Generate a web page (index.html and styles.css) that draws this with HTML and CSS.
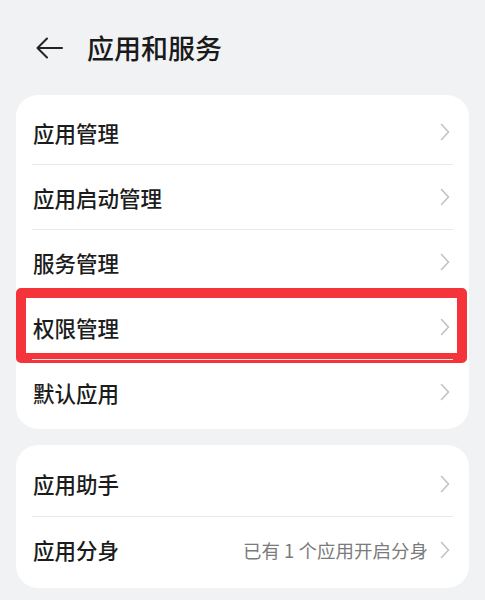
FILE: index.html
```html
<!DOCTYPE html>
<html lang="zh-CN">
<head>
<meta charset="utf-8">
<title>应用和服务</title>
<link rel="stylesheet" href="styles.css">
</head>
<body>
<header class="topbar">
  <svg class="back" width="28" height="22" viewBox="0 0 28 22" aria-hidden="true">
    <path d="M27 11H2.5M12 1.5L2.5 11L12 20.5" fill="none" stroke="#222" stroke-width="2" stroke-linecap="round" stroke-linejoin="round"/>
  </svg>
  <h1 class="title">应用和服务</h1>
</header>

<section class="card">
  <div class="row"><span class="label">应用管理</span><svg class="chev" width="10" height="18" viewBox="0 0 10 18"><path d="M1.5 1.5L8.5 9L1.5 16.5" fill="none" stroke="#c2c2c2" stroke-width="1.6" stroke-linecap="round" stroke-linejoin="round"/></svg></div>
  <div class="row"><span class="label">应用启动管理</span><svg class="chev" width="10" height="18" viewBox="0 0 10 18"><path d="M1.5 1.5L8.5 9L1.5 16.5" fill="none" stroke="#c2c2c2" stroke-width="1.6" stroke-linecap="round" stroke-linejoin="round"/></svg></div>
  <div class="row"><span class="label">服务管理</span><svg class="chev" width="10" height="18" viewBox="0 0 10 18"><path d="M1.5 1.5L8.5 9L1.5 16.5" fill="none" stroke="#c2c2c2" stroke-width="1.6" stroke-linecap="round" stroke-linejoin="round"/></svg></div>
  <div class="row highlighted"><span class="label">权限管理</span><svg class="chev" width="10" height="18" viewBox="0 0 10 18"><path d="M1.5 1.5L8.5 9L1.5 16.5" fill="none" stroke="#c2c2c2" stroke-width="1.6" stroke-linecap="round" stroke-linejoin="round"/></svg><span class="mark"></span></div>
  <div class="row"><span class="label">默认应用</span><svg class="chev" width="10" height="18" viewBox="0 0 10 18"><path d="M1.5 1.5L8.5 9L1.5 16.5" fill="none" stroke="#c2c2c2" stroke-width="1.6" stroke-linecap="round" stroke-linejoin="round"/></svg></div>
</section>

<section class="card card-tall">
  <div class="row"><span class="label">应用助手</span><svg class="chev" width="10" height="18" viewBox="0 0 10 18"><path d="M1.5 1.5L8.5 9L1.5 16.5" fill="none" stroke="#c2c2c2" stroke-width="1.6" stroke-linecap="round" stroke-linejoin="round"/></svg></div>
  <div class="row"><span class="label">应用分身</span><span class="value">已有 1 个应用开启分身</span><svg class="chev" width="10" height="18" viewBox="0 0 10 18"><path d="M1.5 1.5L8.5 9L1.5 16.5" fill="none" stroke="#c2c2c2" stroke-width="1.6" stroke-linecap="round" stroke-linejoin="round"/></svg></div>
</section>
</body>
</html>
```

FILE: styles.css
```css
html, body {
  margin: 0;
  padding: 0;
}
body {
  background: #f1f2f4;
  font-family: "Noto Sans CJK SC", "Noto Sans", sans-serif;
  color: #191919;
  width: 485px;
  height: 600px;
  overflow: hidden;
}
.topbar {
  height: 95px;
  display: flex;
  align-items: center;
  padding-left: 35px;
  box-sizing: border-box;
}
.back {
  display: block;
  flex: none;
}
.title {
  margin: 0 0 0 24px;
  font-size: 27px;
  font-weight: 500;
  line-height: 1;
  color: #1a1a1a;
}
.card {
  margin: 0 16px 16px;
  background: #ffffff;
  border-radius: 22px;
  padding: 5px 16px;
}
.card-tall {
  padding: 6px 16px;
}
.card-tall .row {
  height: 65px;
}
.row {
  position: relative;
  height: 64px;
  display: flex;
  align-items: center;
}
.row + .row {
  border-top: 1px solid #e9e9e9;
}
.label {
  flex: 1;
  font-size: 21.5px;
  font-weight: 500;
  color: #1c1c1c;
  padding-left: 1px;
}
.value {
  font-size: 18.5px;
  color: #7b7b7b;
  margin-right: 12px;
}
.chev {
  display: block;
  flex: none;
  margin-right: 3px;
}
.mark {
  position: absolute;
  left: -16px;
  right: -14px;
  top: -7px;
  bottom: -4px;
  border: 10px solid #f4333b;
  border-radius: 5px;
  pointer-events: none;
}
```
